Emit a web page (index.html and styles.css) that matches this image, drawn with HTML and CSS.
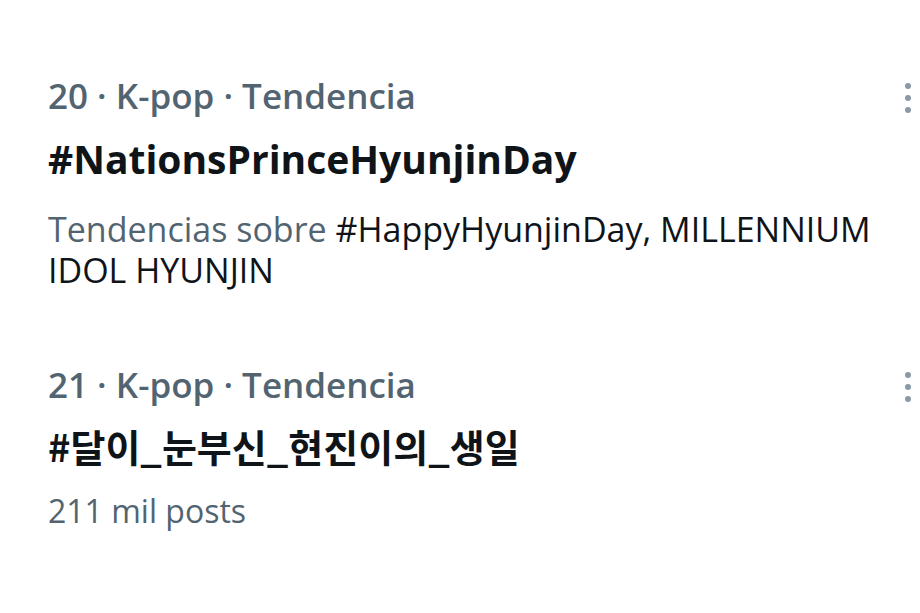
FILE: index.html
```html
<!DOCTYPE html>
<html lang="es">
<head>
<meta charset="utf-8">
<title>Tendencias</title>
<link rel="stylesheet" href="styles.css">
</head>
<body>
<div class="list">
  <div class="trend">
    <div class="body">
      <div class="meta">20 · K-pop · Tendencia</div>
      <div class="title">#NationsPrinceHyunjinDay</div>
      <div class="sub"><span class="muted">Tendencias sobre</span> #HappyHyunjinDay, MILLENNIUM IDOL HYUNJIN</div>
    </div>
    <svg class="more" width="8" height="32" viewBox="0 0 8 32"><circle cx="4" cy="4" r="3"/><circle cx="4" cy="16" r="3"/><circle cx="4" cy="28" r="3"/></svg>
  </div>
  <div class="trend second">
    <div class="body">
      <div class="meta">21 · K-pop · Tendencia</div>
      <div class="title ko">#달이_눈부신_현진이의_생일</div>
      <div class="sub muted posts">211 mil posts</div>
    </div>
    <svg class="more" width="8" height="32" viewBox="0 0 8 32"><circle cx="4" cy="4" r="3"/><circle cx="4" cy="16" r="3"/><circle cx="4" cy="28" r="3"/></svg>
  </div>
</div>
</body>
</html>
```
FILE: styles.css
```css
html, body {
  margin: 0;
  padding: 0;
  background: #ffffff;
}
body {
  font-family: "Open Sans", "Noto Sans CJK KR", sans-serif;
  color: #0f1419;
  width: 920px;
  height: 613px;
  overflow: hidden;
}
.list {
  display: flex;
  flex-direction: column;
  padding-top: 75px;
}
.trend {
  display: flex;
  align-items: flex-start;
  padding-left: 48px;
  padding-right: 8px;
}
.second {
  margin-top: 73px;
}
.body {
  flex: 1;
  min-width: 0;
  padding-right: 20px;
}
.meta {
  font-size: 35px;
  line-height: 42px;
  font-weight: 600;
  color: #536471;
}
.title {
  font-size: 39px;
  line-height: 48px;
  font-weight: 700;
  margin-top: 18px;
}
.title.ko {
  font-family: "Noto Sans CJK KR", sans-serif;
  font-size: 38px;
  margin-top: 16px;
}
.sub {
  font-size: 34px;
  line-height: 41px;
  margin-top: 26px;
}
.sub.posts {
  font-size: 32px;
  margin-top: 20px;
}
.muted {
  color: #536471;
}
.more {
  fill: #8b98a5;
  margin-top: 7px;
  flex: none;
}
```
